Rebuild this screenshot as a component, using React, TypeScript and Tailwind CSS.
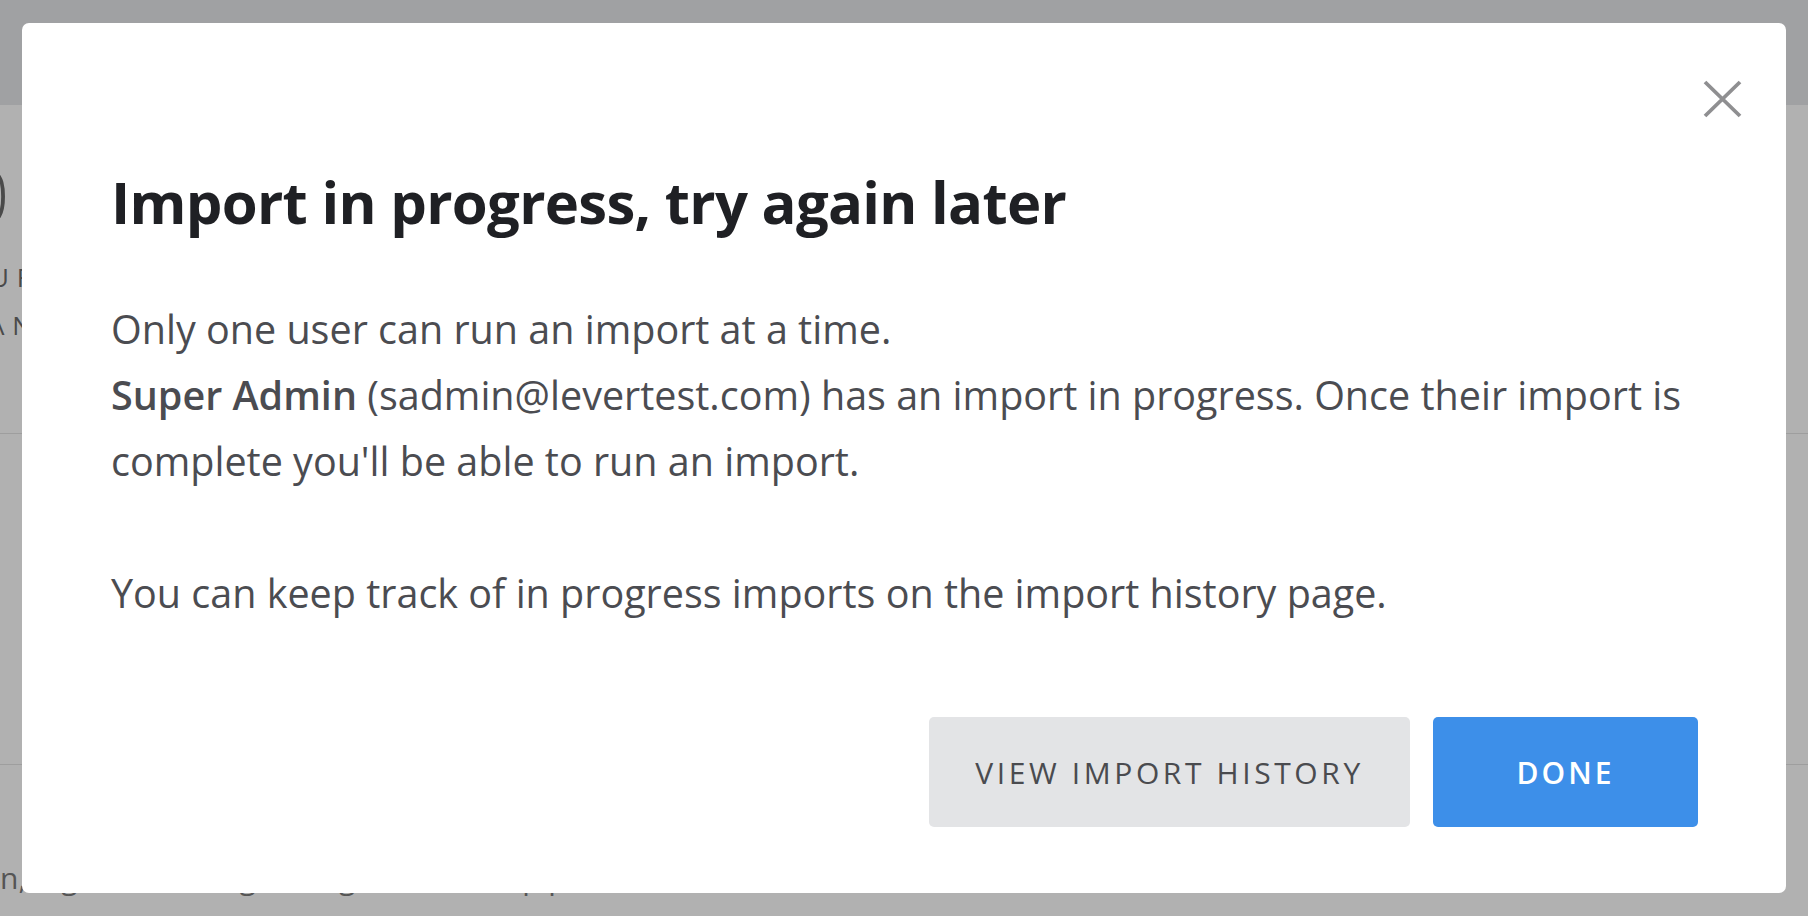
import React from "react";

const font = "font-['Open_Sans',sans-serif]";

function CloseIcon() {
  return (
    <svg viewBox="0 0 39 38" className="w-[39px] h-[38px]" fill="none">
      <path d="M2 2L37 36M37 2L2 36" stroke="#8f8f91" strokeWidth="3.8" />
    </svg>
  );
}

function Backdrop() {
  return (
    <div className={`w-full h-[916px] overflow-hidden bg-[#b1b1b1] ${font}`}>
      <div className="h-[105px] bg-[#a0a1a3]" />
      <div className="h-[329px] border-b border-[#9e9e9e] pt-[50px] text-[#4a4a4a]">
        <div className="-ml-[34px] text-[76px] leading-[80px] font-light">0</div>
        <div className="-ml-[10px] mt-[27px] text-[26px] tracking-[0.3em] leading-[30px]">UR</div>
        <div className="-ml-[12px] mt-[18px] text-[26px] tracking-[0.3em] leading-[30px]">AN</div>
      </div>
      <div className="h-[331px] border-b border-[#9e9e9e]" />
      <div className="pt-[96px] ml-0 text-[30px] leading-[34px] text-[#555] whitespace-nowrap">
        n, tags and settings, integrations and pipeline
      </div>
    </div>
  );
}

export default function App() {
  return (
    <div className="relative w-full h-[916px]">
      <Backdrop />
      <div className={`absolute left-[22px] top-[23px] w-[1764px] h-[870px] bg-white rounded-[7px] pl-[89px] pr-[88px] pt-[142px] ${font}`}>
        <button className="absolute right-[44px] top-[57px]">
          <CloseIcon />
        </button>
        <h1 className="text-[58px] leading-[74px] font-bold tracking-[-0.7px] text-[#1f2024] whitespace-nowrap">
          Import in progress, try again later
        </h1>
        <p className="mt-[57px] text-[39.5px] leading-[66px] text-[#4b4c51] whitespace-nowrap">
          Only one user can run an import at a time.
          <br />
          <b className="font-semibold">Super Admin</b> (sadmin@levertest.com) has an import in progress. Once their import is
          <br />
          complete you'll be able to run an import.
          <br />
          <br />
          You can keep track of in progress imports on the import history page.
        </p>
        <div className="mt-[91px] flex justify-end gap-[23px]">
          <button className="w-[481px] h-[110px] rounded-[5px] bg-[#e3e4e6] text-[#4a4b4f] text-[30px] font-medium tracking-[0.12em] uppercase">
            View Import History
          </button>
          <button className="w-[265px] h-[110px] rounded-[5px] bg-[#3d8fe9] text-white text-[30px] font-semibold tracking-[0.1em] uppercase">
            Done
          </button>
        </div>
      </div>
    </div>
  );
}
